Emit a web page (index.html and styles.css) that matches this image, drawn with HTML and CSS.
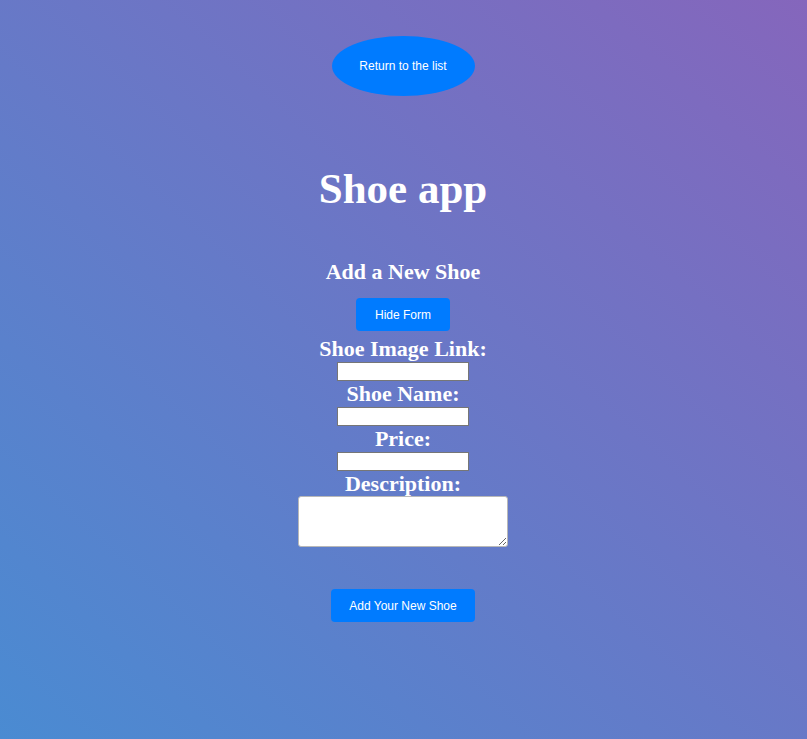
FILE: index.html
```html
<!DOCTYPE html>
<html>
<head>
<meta charset="utf-8">
<link rel="stylesheet" href="styles.css">
<title>Shoe app</title>
</head>
<body>
<div class="page">
  <button class="return-btn">Return to the list</button>
  <h1 class="title">Shoe app</h1>
  <h3 class="subtitle">Add a New Shoe</h3>
  <button class="btn hide-btn">Hide Form</button>
  <form class="shoe-form">
    <label class="field-label">Shoe Image Link:</label>
    <input class="field-input" type="text">
    <label class="field-label">Shoe Name:</label>
    <input class="field-input" type="text">
    <label class="field-label">Price:</label>
    <input class="field-input" type="text">
    <label class="field-label">Description:</label>
    <textarea class="field-area"></textarea>
    <button class="btn add-btn" type="button">Add Your New Shoe</button>
  </form>
</div>
</body>
</html>
```
FILE: styles.css
```css
html, body {
  margin: 0;
  padding: 0;
  height: 100%;
}
body {
  background: linear-gradient(to top right, #4a8bd2, #8566bc);
  color: #fff;
  font-family: "Liberation Serif", "Times New Roman", serif;
}
.page {
  display: flex;
  flex-direction: column;
  align-items: center;
  padding-top: 36px;
  padding-right: 1px;
}
.return-btn {
  width: 143px;
  height: 60px;
  border: none;
  border-radius: 50%;
  background: #007bff;
  color: #fff;
  font-family: "Liberation Sans", Arial, sans-serif;
  font-size: 12px;
  padding: 0;
  margin: 0;
}
.title {
  font-size: 43px;
  line-height: 50px;
  margin: 68px 0 0;
  font-weight: bold;
}
.subtitle {
  font-size: 22px;
  line-height: 25px;
  margin: 45px 0 0;
  font-weight: bold;
}
.btn {
  background: #007bff;
  color: #fff;
  border: none;
  border-radius: 4px;
  font-family: "Liberation Sans", Arial, sans-serif;
  font-size: 12px;
  height: 33px;
  padding: 0;
  margin: 0;
}
.hide-btn {
  width: 94px;
  margin-top: 14px;
}
.shoe-form {
  display: flex;
  flex-direction: column;
  align-items: center;
  margin-top: 6px;
}
.field-label {
  display: block;
  font-size: 22px;
  line-height: 24px;
  font-weight: bold;
}
.field-input {
  box-sizing: border-box;
  width: 132px;
  height: 19px;
  margin: 1px 0 1px;
  border: 1px solid #767676;
  border-radius: 0;
  background: #fff;
  padding: 0 2px;
}
.field-area {
  box-sizing: border-box;
  width: 210px;
  height: 51px;
  margin: 0;
  border: 1px solid #b8b8b8;
  border-radius: 3px;
  background: #fff;
}
.add-btn {
  width: 144px;
  margin-top: 42px;
}
```
